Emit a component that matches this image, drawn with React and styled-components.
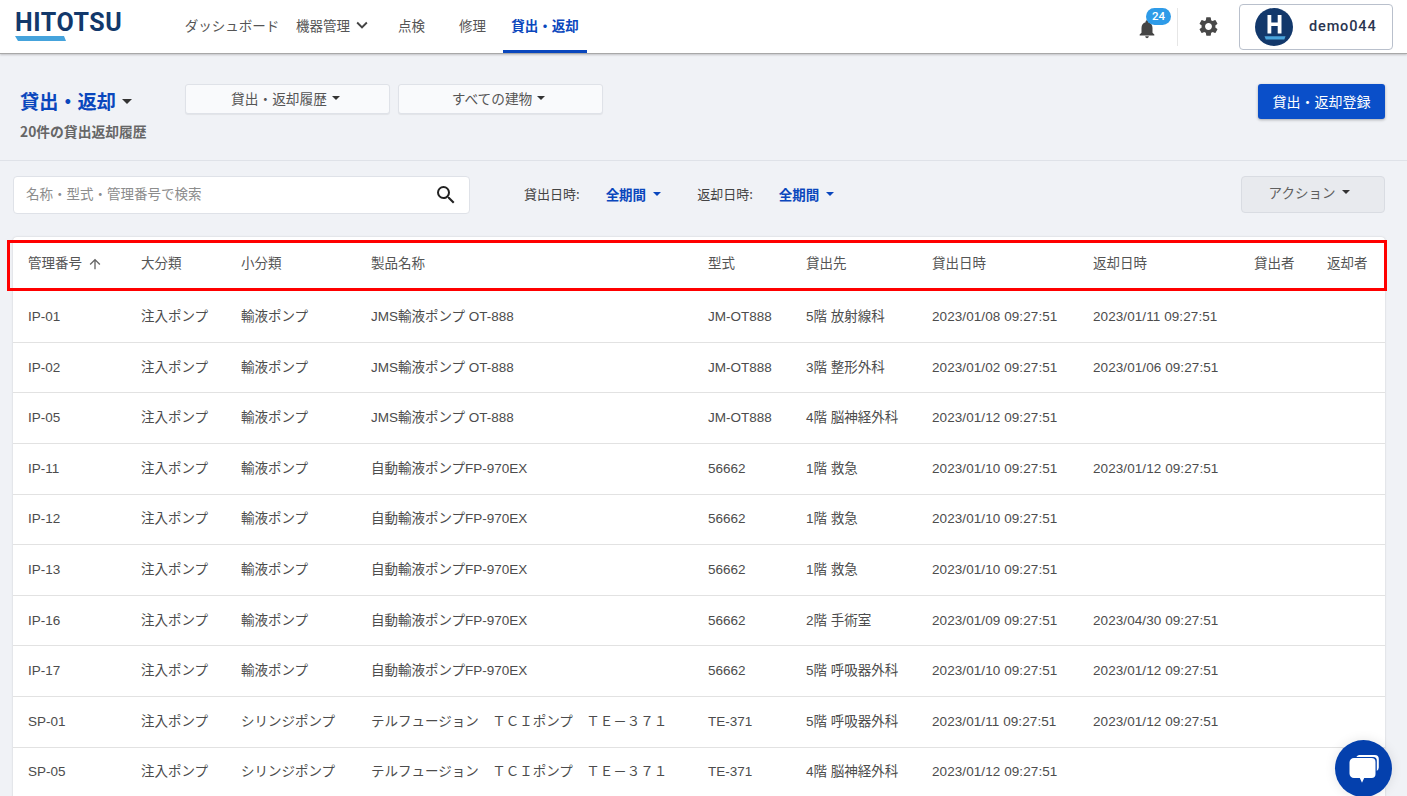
import React from 'react';
import styled, { createGlobalStyle } from 'styled-components';
import { MdNotifications, MdSettings, MdSearch, MdKeyboardArrowDown, MdArrowUpward } from 'react-icons/md';

const JP = `"Noto Sans CJK JP", "Noto Sans", sans-serif`;
const CELL = `"Liberation Sans", "Noto Sans CJK JP", sans-serif`;
const COLUMNS = '113px 100px 130px 337px 98px 126px 161px 161px 73px 73px';

const GlobalStyle = createGlobalStyle`
  html, body { margin: 0; padding: 0; height: 100%; overflow: hidden; }
  body { background: #f0f2f6; font-family: ${JP}; }
  * { box-sizing: border-box; }
`;

const Page = styled.div`
  position: relative;
  width: 100%;
  height: 100vh;
  overflow: hidden;
  background: #f0f2f6;
`;

const TopBar = styled.header`
  height: 54px;
  background: #fff;
  border-bottom: 1px solid #a8a8a8;
  box-shadow: 0 1px 2px rgba(0, 0, 0, 0.2);
  display: flex;
  align-items: stretch;
  padding: 0 14px 0 15px;
`;

const Logo = styled.div`
  width: 165px;
  padding-top: 10px;
  display: flex;
  flex-direction: column;
  flex-shrink: 0;
`;

const LogoText = styled.span`
  font-family: "Roboto", sans-serif;
  font-weight: 700;
  font-size: 25px;
  line-height: 26px;
  letter-spacing: 0.55px;
  color: #12386b;
`;

const LogoBar = styled.svg`
  display: block;
`;

const Nav = styled.nav`
  display: flex;
  align-items: stretch;
  flex: 1;
`;

const NavItem = styled.a`
  display: flex;
  align-items: center;
  justify-content: center;
  font-size: 13.5px;
  height: 53px;
  width: ${(p) => p.$w}px;
  padding-left: ${(p) => p.$pl || 0}px;
  color: ${(p) => (p.$active ? '#0a47bd' : '#555')};
  font-weight: ${(p) => (p.$active ? 700 : 400)};
  border-bottom: ${(p) => (p.$active ? '3px solid #0a47bd' : '3px solid transparent')};
  svg { font-size: 22px; color: #444; margin-left: 1px; }
`;

const TopRight = styled.div`
  display: flex;
  align-items: center;
`;

const BellWrap = styled.div`
  position: relative;
  width: 40px;
  height: 36px;
  margin-right: 10px;
  display: flex;
  align-items: center;
  color: #444;
  font-size: 22px;
  padding-top: 4px;
  padding-left: 9px;
`;

const Badge = styled.span`
  position: absolute;
  top: -1px;
  left: 19px;
  width: 25px;
  height: 17px;
  border-radius: 9px;
  background: #2e9be8;
  color: #fff;
  font-family: "Roboto", sans-serif;
  font-weight: 500;
  font-size: 11.5px;
  line-height: 17px;
  text-align: center;
`;

const Divider = styled.span`
  width: 1px;
  height: 38px;
  background: #e6e6e6;
`;

const Gear = styled.div`
  width: 61px;
  display: flex;
  justify-content: center;
  font-size: 23px;
  color: #484848;
`;

const UserBox = styled.div`
  width: 154px;
  height: 46px;
  border: 1px solid #b9c0cc;
  border-radius: 4px;
  display: flex;
  align-items: center;
  padding-left: 15px;
`;

const UserName = styled.span`
  margin-left: 16px;
  font-family: "Roboto", sans-serif;
  font-weight: 500;
  font-size: 14.5px;
  letter-spacing: 0.85px;
  color: #2a3550;
`;

const SubHeader = styled.section`
  height: 107px;
  border-bottom: 1px solid #dfe2e8;
  padding: 30px 22px 0 20px;
  display: flex;
  align-items: flex-start;
`;

const TitleBlock = styled.div`
  width: 165px;
`;

const Title = styled.h1`
  margin: 0;
  font-size: 19.2px;
  line-height: 34px;
  font-weight: 700;
  color: #0a47bd;
  display: flex;
  align-items: center;
  gap: 6px;
`;

const Count = styled.div`
  font-size: 13.8px;
  font-weight: 700;
  color: #666;
  line-height: 18px;
  margin-top: 4px;
  white-space: nowrap;
`;

const Caret = styled.span`
  display: inline-block;
  width: 0;
  height: 0;
  border-left: ${(p) => p.$s || 4}px solid transparent;
  border-right: ${(p) => p.$s || 4}px solid transparent;
  border-top: ${(p) => p.$s || 4}px solid ${(p) => p.$c || '#333'};
`;

const Selects = styled.div`
  display: flex;
  gap: 8px;
`;

const SelectButton = styled.button`
  width: 205px;
  height: 30px;
  background: #f9fafc;
  border: 1px solid #dfe2e8;
  border-radius: 3px;
  box-shadow: 0 1px 1px rgba(0, 0, 0, 0.06);
  font-family: ${JP};
  font-size: 13.7px;
  color: #555;
  display: flex;
  align-items: center;
  justify-content: center;
  gap: 5px;
  padding: 0 4px 2px 0;
`;

const PrimaryButton = styled.button`
  margin-left: auto;
  width: 127px;
  height: 35px;
  background: #0a4fc9;
  color: #fff;
  border: 0;
  border-radius: 3px;
  box-shadow: 0 1px 3px rgba(0, 0, 0, 0.3);
  font-family: ${JP};
  font-size: 14px;
  padding: 0 0 2px;
`;

const FilterRow = styled.section`
  height: 76px;
  padding: 15px 22px 0 13px;
  display: flex;
  align-items: flex-start;
`;

const SearchBox = styled.div`
  width: 457px;
  height: 38px;
  background: #fff;
  border: 1px solid #dfe2e8;
  border-radius: 4px;
  display: flex;
  align-items: center;
  justify-content: space-between;
  padding: 0 11px 0 12px;
  font-size: 13.5px;
  color: #8c8c8c;
`;

const SearchHint = styled.span`
  padding-bottom: 5px;
`;

const SearchIcon = styled(MdSearch)`
  font-size: 24px;
  color: #222;
`;

const DateFilter = styled.div`
  height: 38px;
  padding-bottom: 3px;
  display: flex;
  align-items: center;
  margin-left: ${(p) => p.$ml}px;
  font-size: 13px;
  color: #444;
`;

const DateValue = styled.span`
  margin-left: 26px;
  font-size: 13.5px;
  font-weight: 700;
  color: #0a47bd;
  display: flex;
  align-items: center;
  gap: 7px;
`;

const ActionButton = styled.button`
  margin-left: auto;
  width: 144px;
  height: 37px;
  background: #e8eaee;
  border: 1px solid #d9dce2;
  border-radius: 4px;
  font-family: ${JP};
  font-size: 13.5px;
  color: #5f5f5f;
  display: flex;
  align-items: center;
  justify-content: center;
  gap: 7px;
  padding: 0 7px 5px 0;
`;

const TableWrap = styled.div`
  position: relative;
  margin-left: 13px;
  width: 1372px;
  background: #fff;
  border-radius: 4px 4px 0 0;
  box-shadow: 0 0 2px rgba(0, 0, 0, 0.18);
`;

const Row = styled.div`
  display: grid;
  grid-template-columns: ${COLUMNS};
  height: ${(p) => (p.$head ? 55.2 : 50.6)}px;
  padding-bottom: ${(p) => (p.$head ? 2 : 0)}px;
  align-items: center;
  border-bottom: ${(p) => (p.$head ? '0' : '1px solid #e2e2e2')};
`;

const HeadCell = styled.div`
  padding-left: 15px;
  font-family: ${CELL};
  font-size: 13.5px;
  line-height: 20px;
  color: #555;
  display: flex;
  align-items: center;
  gap: 5px;
  svg { font-size: 16px; color: #666; }
`;

const Cell = styled.div`
  padding-left: 15px;
  font-family: ${CELL};
  font-size: 13.5px;
  line-height: 20px;
  color: #4c4c4c;
  white-space: nowrap;
  letter-spacing: ${(p) => (p.$date ? '0.08px' : '0')};
`;

const Highlight = styled.div`
  position: absolute;
  left: -6px;
  top: 3px;
  width: 1380px;
  height: 51px;
  border: 3px solid #ff0000;
  pointer-events: none;
`;

const ChatBubble = styled.div`
  position: absolute;
  left: 1335px;
  top: 740px;
  width: 57px;
  height: 57px;
  border-radius: 50%;
  background: #0440ad;
  display: flex;
  align-items: center;
  justify-content: center;
  box-shadow: 0 0 12px rgba(0, 0, 0, 0.1);
`;

const heads = ['大分類', '小分類', '製品名称', '型式', '貸出先', '貸出日時', '返却日時', '貸出者', '返却者'];

const jms = 'JMS輸液ポンプ OT-888';
const fp = '自動輸液ポンプFP-970EX';
const te = 'テルフュージョン　ＴＣＩポンプ　ＴＥ－３７１';

const rows = [
  ['IP-01', '輸液ポンプ', jms, 'JM-OT888', '5階 放射線科', '2023/01/08 09:27:51', '2023/01/11 09:27:51'],
  ['IP-02', '輸液ポンプ', jms, 'JM-OT888', '3階 整形外科', '2023/01/02 09:27:51', '2023/01/06 09:27:51'],
  ['IP-05', '輸液ポンプ', jms, 'JM-OT888', '4階 脳神経外科', '2023/01/12 09:27:51', ''],
  ['IP-11', '輸液ポンプ', fp, '56662', '1階 救急', '2023/01/10 09:27:51', '2023/01/12 09:27:51'],
  ['IP-12', '輸液ポンプ', fp, '56662', '1階 救急', '2023/01/10 09:27:51', ''],
  ['IP-13', '輸液ポンプ', fp, '56662', '1階 救急', '2023/01/10 09:27:51', ''],
  ['IP-16', '輸液ポンプ', fp, '56662', '2階 手術室', '2023/01/09 09:27:51', '2023/04/30 09:27:51'],
  ['IP-17', '輸液ポンプ', fp, '56662', '5階 呼吸器外科', '2023/01/10 09:27:51', '2023/01/12 09:27:51'],
  ['SP-01', 'シリンジポンプ', te, 'TE-371', '5階 呼吸器外科', '2023/01/11 09:27:51', '2023/01/12 09:27:51'],
  ['SP-05', 'シリンジポンプ', te, 'TE-371', '4階 脳神経外科', '2023/01/12 09:27:51', ''],
];

const Avatar = () => (
  <svg width="38" height="38" viewBox="0 0 38 38">
    <circle cx="19" cy="19" r="19" fill="#12386b" />
    <path d="M12.5 7h3.8v7.6h6.4V7h3.8v18.5h-3.8v-7.4h-6.4v7.4h-3.8z" fill="#fff" />
    <path d="M9.5 28.3h21l-1.2 3.2H10.8z" fill="#4aa5dc" />
  </svg>
);

const ChatIcon = () => (
  <svg width="32" height="32" viewBox="0 0 32 32">
    <path d="M11 2h15.8a4 4 0 0 1 4 4v8.5a4 4 0 0 1-2 3.4V7.6a3.6 3.6 0 0 0-3.6-3.6H8.3A4 4 0 0 1 11 2z" fill="#fff" />
    <path d="M6 5h17.5a4 4 0 0 1 4 4v12a4 4 0 0 1-4 4h-7.3l-2.2 4.8-2.2-4.8H6a4.5 4.5 0 0 1-4.5-4.5V9.5A4.5 4.5 0 0 1 6 5z" fill="#fff" />
  </svg>
);

const App = () => (
  <Page>
    <GlobalStyle />
    <TopBar>
      <Logo>
        <LogoText>HITOTSU</LogoText>
        <LogoBar width="52" height="6" viewBox="0 0 52 6">
          <path d="M0 0h49l2 5H3z" fill="#45a3dc" />
        </LogoBar>
      </Logo>
      <Nav>
        <NavItem $w={104}>ダッシュボード</NavItem>
        <NavItem $w={97} $pl={4}>機器管理<MdKeyboardArrowDown /></NavItem>
        <NavItem $w={61}>点検</NavItem>
        <NavItem $w={61}>修理</NavItem>
        <NavItem $w={84} $active>貸出・返却</NavItem>
      </Nav>
      <TopRight>
        <BellWrap>
          <MdNotifications />
          <Badge>24</Badge>
        </BellWrap>
        <Divider />
        <Gear><MdSettings /></Gear>
        <UserBox>
          <Avatar />
          <UserName>demo044</UserName>
        </UserBox>
      </TopRight>
    </TopBar>

    <SubHeader>
      <TitleBlock>
        <Title>貸出・返却<Caret $s={5} /></Title>
        <Count>20件の貸出返却履歴</Count>
      </TitleBlock>
      <Selects>
        <SelectButton>貸出・返却履歴<Caret /></SelectButton>
        <SelectButton>すべての建物<Caret /></SelectButton>
      </Selects>
      <PrimaryButton>貸出・返却登録</PrimaryButton>
    </SubHeader>

    <FilterRow>
      <SearchBox>
        <SearchHint>名称・型式・管理番号で検索</SearchHint>
        <SearchIcon />
      </SearchBox>
      <DateFilter $ml={54}>
        貸出日時:
        <DateValue>全期間<Caret $c="#0a47bd" /></DateValue>
      </DateFilter>
      <DateFilter $ml={36}>
        返却日時:
        <DateValue>全期間<Caret $c="#0a47bd" /></DateValue>
      </DateFilter>
      <ActionButton>アクション<Caret /></ActionButton>
    </FilterRow>

    <TableWrap>
      <Row $head>
        <HeadCell>管理番号<MdArrowUpward /></HeadCell>
        {heads.map((h) => <HeadCell key={h}>{h}</HeadCell>)}
      </Row>
      {rows.map((r) => (
        <Row key={r[0]}>
          <Cell>{r[0]}</Cell>
          <Cell>注入ポンプ</Cell>
          <Cell>{r[1]}</Cell>
          <Cell>{r[2]}</Cell>
          <Cell>{r[3]}</Cell>
          <Cell>{r[4]}</Cell>
          <Cell $date>{r[5]}</Cell>
          <Cell $date>{r[6]}</Cell>
          <Cell />
          <Cell />
        </Row>
      ))}
      <Highlight />
    </TableWrap>

    <ChatBubble><ChatIcon /></ChatBubble>
  </Page>
);

export default App;
